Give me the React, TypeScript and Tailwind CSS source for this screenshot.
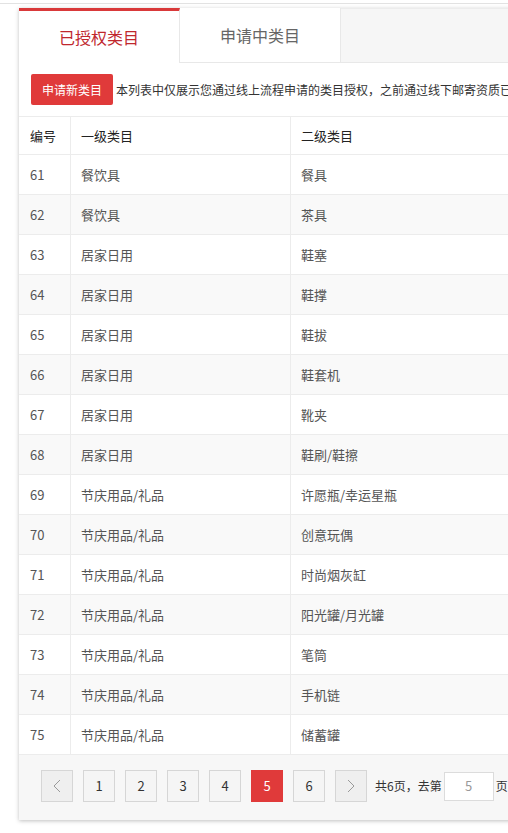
import React from 'react';

const rows: [number, string, string][] = [
  [61, '餐饮具', '餐具'],
  [62, '餐饮具', '茶具'],
  [63, '居家日用', '鞋塞'],
  [64, '居家日用', '鞋撑'],
  [65, '居家日用', '鞋拔'],
  [66, '居家日用', '鞋套机'],
  [67, '居家日用', '靴夹'],
  [68, '居家日用', '鞋刷/鞋擦'],
  [69, '节庆用品/礼品', '许愿瓶/幸运星瓶'],
  [70, '节庆用品/礼品', '创意玩偶'],
  [71, '节庆用品/礼品', '时尚烟灰缸'],
  [72, '节庆用品/礼品', '阳光罐/月光罐'],
  [73, '节庆用品/礼品', '笔筒'],
  [74, '节庆用品/礼品', '手机链'],
  [75, '节庆用品/礼品', '储蓄罐'],
];

const font = { fontFamily: '"Noto Sans CJK SC", "Noto Sans", sans-serif' };

function Chevron({ dir }: { dir: 'left' | 'right' }) {
  return (
    <svg width="8" height="14" viewBox="0 0 8 14" fill="none">
      <path
        d={dir === 'left' ? 'M7 1 L1 7 L7 13' : 'M1 1 L7 7 L1 13'}
        stroke="#9a9a9a"
        strokeWidth="1"
      />
    </svg>
  );
}

export default function App() {
  return (
    <div className="w-[508px] h-[833px] overflow-hidden bg-white" style={font}>
      <div className="mt-[3px] border-t border-[#e2e2e2]" />
      <div className="ml-[19px] mt-[4px] w-[720px] bg-white shadow-[0_1px_4px_rgba(0,0,0,0.25)]">
        {/* Tabs */}
        <div className="flex h-[55px]">
          <div className="w-[161px] border-t-[3px] border-[#d9393a] border-r border-r-[#e8e8e8] flex items-center justify-center text-[16px] text-[#c0272d]">
            已授权类目
          </div>
          <div className="w-[161px] border-b border-[#e8e8e8] border-r border-r-[#e8e8e8] flex items-center justify-center text-[16px] text-[#666]">
            申请中类目
          </div>
          <div className="flex-1 bg-[#f6f6f6] border-b border-[#e8e8e8] border-t border-t-[#ececec]" />
        </div>

        {/* Notice */}
        <div className="flex items-center h-[53px] px-3">
          <button className="w-[82px] h-[31px] bg-[#e03a3a] rounded-[2px] text-white text-[12px]">
            申请新类目
          </button>
          <span className="ml-[3px] text-[12px] text-[#333] whitespace-nowrap">
            本列表中仅展示您通过线上流程申请的类目授权，之前通过线下邮寄资质已获得的类目授权不在此列表中展示
          </span>
        </div>

        {/* Table */}
        <div className="text-[13px]">
          <div className="flex h-[39px] border-y border-[#ececec] text-[#222]">
            <div className="w-[52px] pl-[11px] flex items-center border-r border-[#ececec]">编号</div>
            <div className="w-[220px] pl-[10px] flex items-center border-r border-[#ececec]">一级类目</div>
            <div className="flex-1 pl-[10px] flex items-center">二级类目</div>
          </div>
          {rows.map(([id, a, b], i) => (
            <div
              key={id}
              className={`flex h-10 border-b border-[#ececec] text-[#555] ${i % 2 === 1 ? 'bg-[#f9f9f9]' : 'bg-white'}`}
            >
              <div className="w-[52px] pl-[11px] flex items-center border-r border-[#ececec]">{id}</div>
              <div className="w-[220px] pl-[10px] flex items-center border-r border-[#ececec]">{a}</div>
              <div className="flex-1 pl-[10px] flex items-center">{b}</div>
            </div>
          ))}
        </div>

        {/* Pagination */}
        <div className="h-[65px] bg-[#f7f7f7] pl-[22px] pt-[15px] flex items-start gap-[10px] text-[13px]">
          <div className="w-8 h-8 border border-[#d6d6d6] bg-[#efefef] flex items-center justify-center">
            <Chevron dir="left" />
          </div>
          {[1, 2, 3, 4, 5, 6].map((n) =>
            n === 5 ? (
              <div key={n} className="w-8 h-8 bg-[#e03a3a] text-white flex items-center justify-center">
                {n}
              </div>
            ) : (
              <div key={n} className="w-8 h-8 border border-[#d6d6d6] bg-[#f5f5f5] text-[#333] flex items-center justify-center">
                {n}
              </div>
            )
          )}
          <div className="w-8 h-8 border border-[#d6d6d6] bg-[#efefef] flex items-center justify-center">
            <Chevron dir="right" />
          </div>
          <div className="flex items-center h-8 -ml-[2px] text-[12px] text-[#333]">
            <span>共6页，去第</span>
            <div className="w-[50px] h-[29px] mx-[2px] bg-white border border-[#dcdcdc] flex items-center justify-center text-[13px] text-[#999]">
              5
            </div>
            <span>页</span>
          </div>
        </div>
      </div>
    </div>
  );
}
